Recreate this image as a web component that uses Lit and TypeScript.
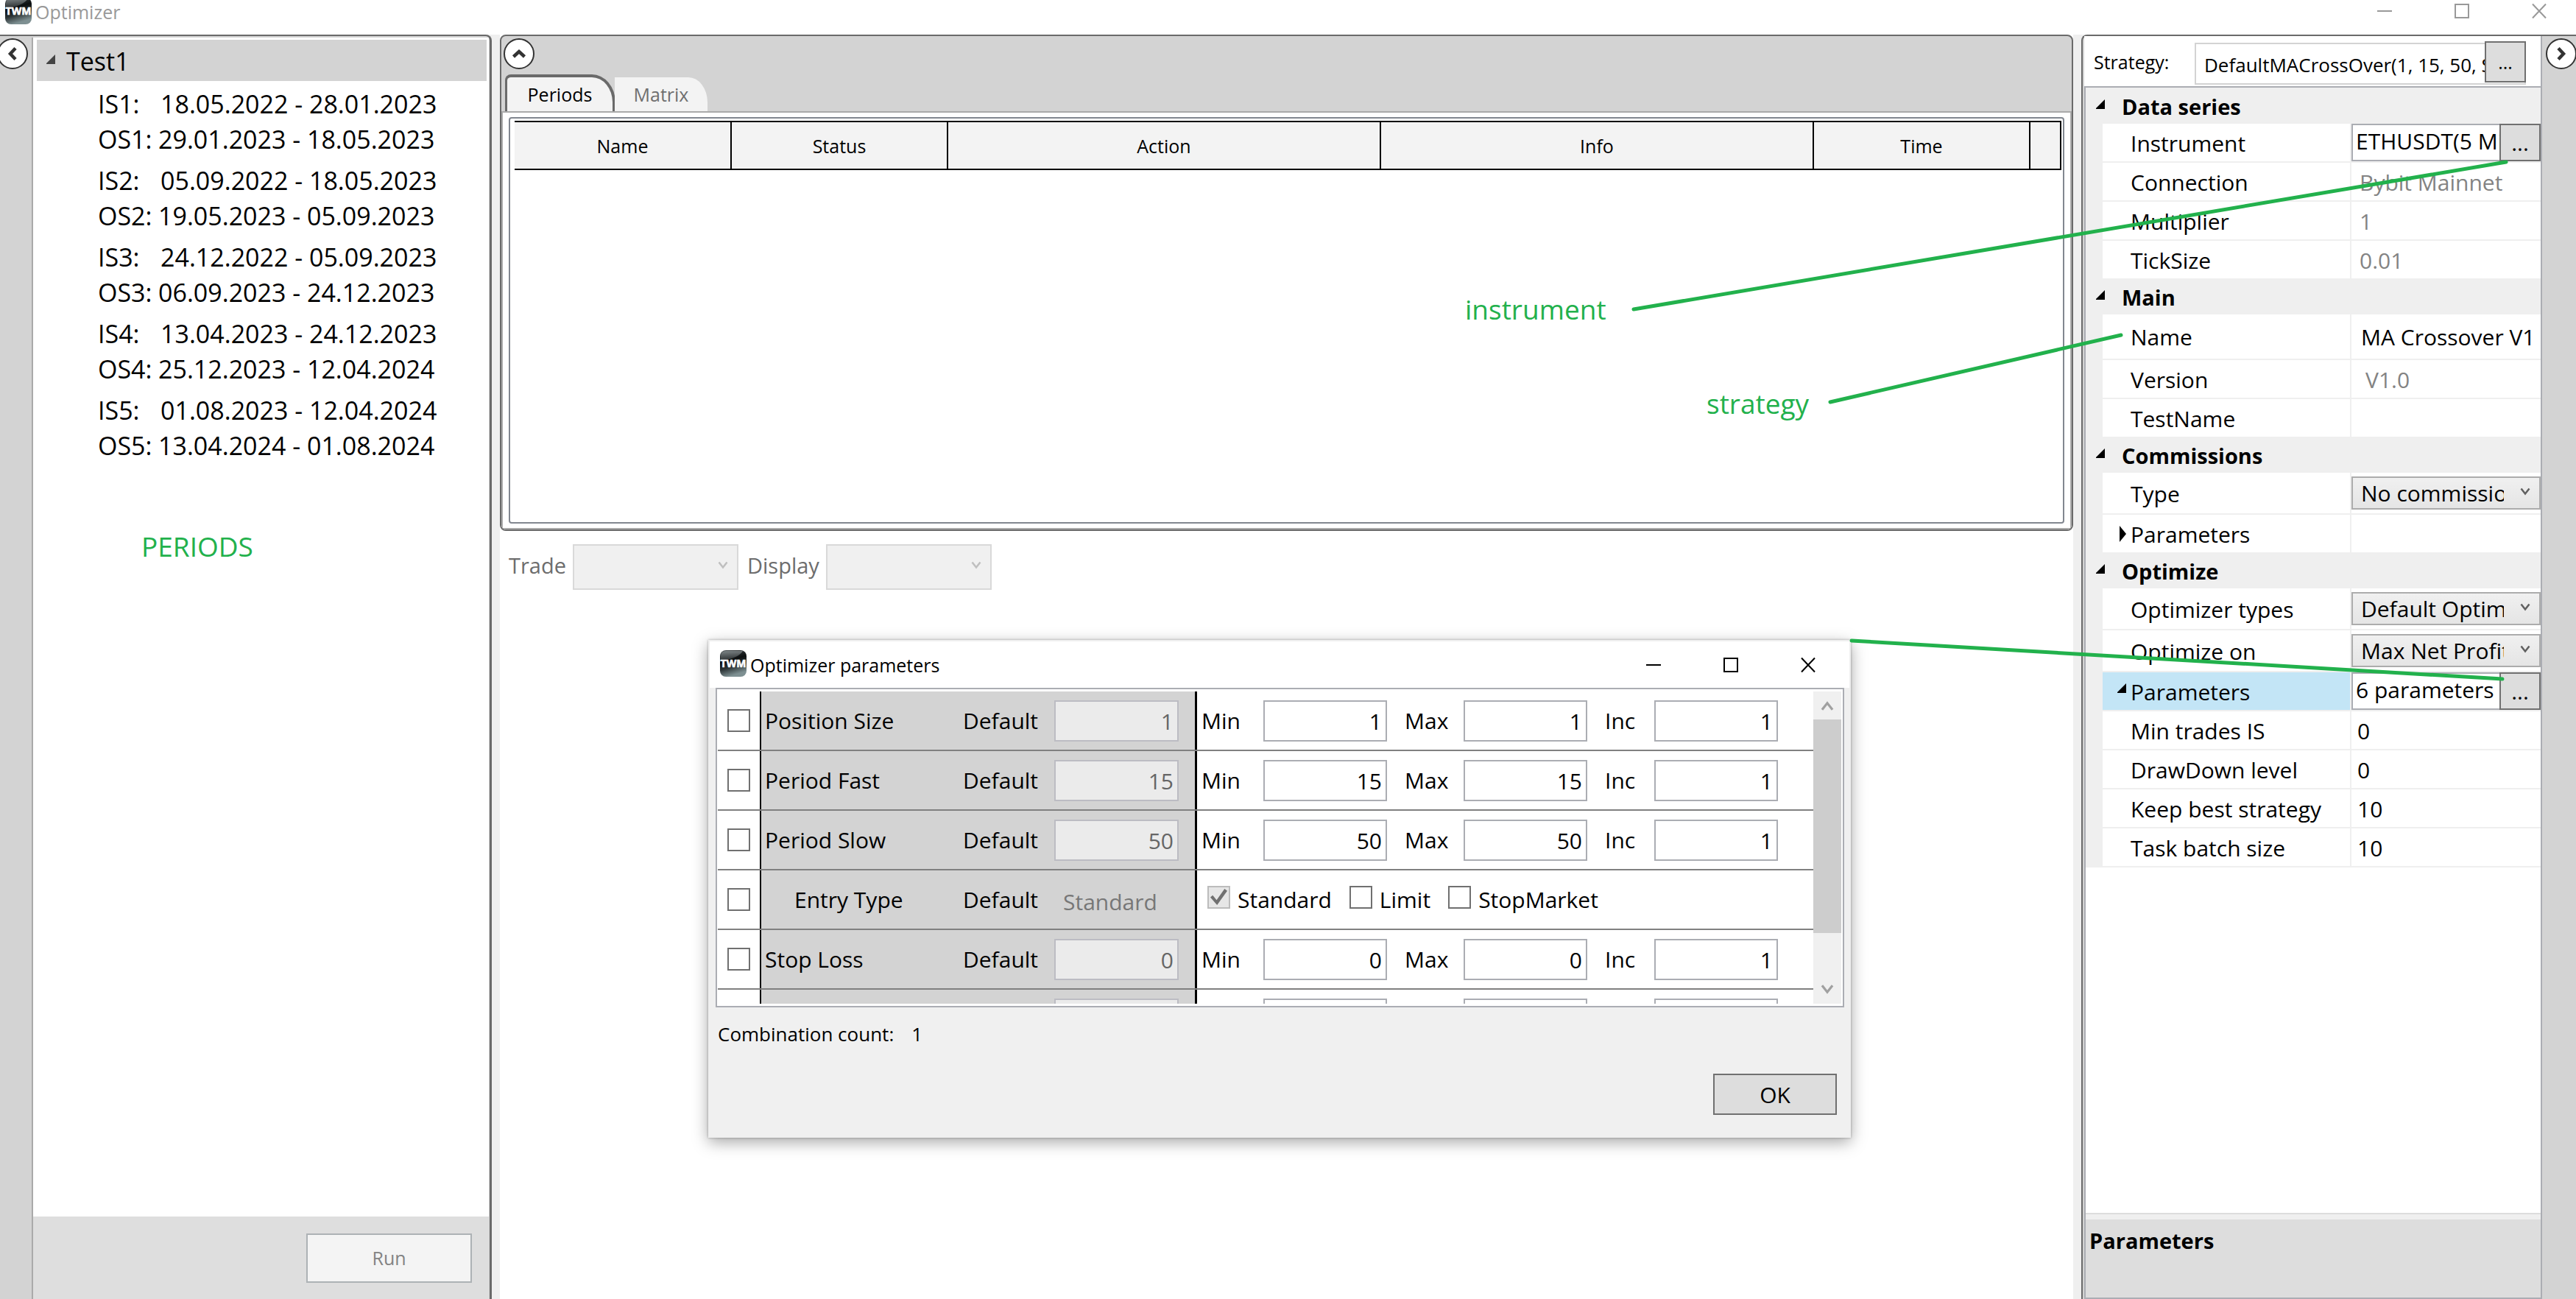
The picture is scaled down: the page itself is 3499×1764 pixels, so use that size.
import { LitElement, html, svg, css, nothing } from "lit";
import { customElement } from "lit/decorators.js";
import { classMap } from "lit/directives/class-map.js";

const base = css`
  :host {
    --font: "Open Sans", "Noto Sans", sans-serif;
    --small: 25px;
    --medium: 26px;
    --heading: 29px;
    --normal: 30px;
    --large: 34px;
    --note: 37px;
    --edge: #6a6a6a;
    --strip: #d3d3d3;
    --soft: #efefef;
    --field: #abadb3;
    font-family: var(--font);
    font-size: var(--normal);
    color: #000;
  }
  *,
  *::before {
    box-sizing: border-box;
  }
  button,
  input,
  select {
    font: inherit;
    color: inherit;
    margin: 0;
    padding: 0;
    border: 0;
    border-radius: 0;
    background: none;
    min-width: 0;
  }
  svg {
    display: block;
  }
  .combo {
    display: grid;
    align-items: center;
  }
  .combo > * {
    grid-area: 1 / 1;
  }
  .combo select {
    appearance: none;
    width: 100%;
    height: 100%;
    padding: 0 48px 0 11px;
    border: 2px solid #acacac;
    background: linear-gradient(#f0f0f0, #e5e5e5);
    opacity: 1;
  }
  .combo svg {
    justify-self: end;
    margin: 0 14px 4px 0;
    pointer-events: none;
  }
`;

const logo = (size: number) => svg`
  <svg width=${size} height=${size} viewBox="0 0 36 36" aria-hidden="true">
    <defs>
      <linearGradient id="body" x1="0" y1="0" x2="0.3" y2="1">
        <stop offset="0" stop-color="#4b5254" />
        <stop offset="0.45" stop-color="#0c0f10" />
        <stop offset="0.7" stop-color="#2b3335" />
        <stop offset="1" stop-color="#7e9092" />
      </linearGradient>
      <linearGradient id="gloss" x1="0" y1="0" x2="0" y2="1">
        <stop offset="0" stop-color="#a3abad" />
        <stop offset="1" stop-color="#3a4042" />
      </linearGradient>
    </defs>
    <rect width="36" height="36" rx="8" fill="url(#body)" />
    <path d="M8 1H31C27 7 19 12 1 14V8Q1 1 8 1Z" fill="url(#gloss)" opacity="0.6" />
    <text x="18" y="23" text-anchor="middle" font-family="Open Sans, sans-serif" font-weight="700" font-size="14" fill="#fff" stroke="#fff" stroke-width="0.6">TWM</text>
  </svg>`;

const chevron = (color: string, width = 14) => svg`
  <svg width=${width} height=${width - 2} viewBox="0 0 14 12" aria-hidden="true">
    <path d="M1.500 1.500L7 8.500L12.500 1.500" fill="none" stroke=${color} stroke-width="2.500" />
  </svg>`;

const circleArrow = (turn: number) => svg`
  <svg width="42" height="42" viewBox="0 0 42 42" aria-hidden="true">
    <circle cx="21" cy="21" r="20" fill="#fff" stroke="#333" stroke-width="2" />
    <path d="M25 13.500L18 21L25 28.500" fill="none" stroke="#333" stroke-width="4.500" transform="rotate(${turn} 21 21)" />
  </svg>`;

const triangle = (open: boolean) => svg`
  <svg width="14" height="22" viewBox="0 0 14 22" aria-hidden="true">
    ${open ? svg`<path d="M12 4V17H-1Z" />` : svg`<path d="M3 0L12 11L3 22Z" />`}
  </svg>`;

const windowIcons = (color: string) => [
  { name: "Minimize", path: "M0 11H20" },
  { name: "Maximize", path: "M1 2H19V20H1Z" },
  { name: "Close", path: "M1 1.500L19 20.500M19 1.500L1 20.500" },
].map(
  (i) => html`<button class="win" aria-label=${i.name}>
    <svg width="20" height="22" viewBox="0 0 20 22"><path d=${i.path} fill="none" stroke=${color} stroke-width="2" /></svg>
  </button>`
);

type Kind = "picker" | "readonly" | "text" | "number" | "combo" | "group";
interface Row {
  id: string;
  label: string;
  kind: Kind;
  value?: string;
  tall?: boolean;
  open?: boolean;
  selected?: boolean;
  inset?: boolean;
}
interface Section {
  title: string;
  rows: Row[];
}

const sections: Section[] = [
  {
    title: "Data series",
    rows: [
      { id: "instrument", label: "Instrument", kind: "picker", value: "ETHUSDT(5 Min)" },
      { id: "connection", label: "Connection", kind: "readonly", value: "Bybit Mainnet" },
      { id: "multiplier", label: "Multiplier", kind: "readonly", value: "1" },
      { id: "ticksize", label: "TickSize", kind: "readonly", value: "0.01" },
    ],
  },
  {
    title: "Main",
    rows: [
      { id: "name", label: "Name", kind: "text", value: "MA Crossover V1", tall: true },
      { id: "version", label: "Version", kind: "readonly", value: "V1.0", inset: true },
      { id: "testname", label: "TestName", kind: "text", value: "" },
    ],
  },
  {
    title: "Commissions",
    rows: [
      { id: "type", label: "Type", kind: "combo", value: "No commission" },
      { id: "comm-params", label: "Parameters", kind: "group", open: false },
    ],
  },
  {
    title: "Optimize",
    rows: [
      { id: "opt-types", label: "Optimizer types", kind: "combo", value: "Default Optimizer" },
      { id: "opt-on", label: "Optimize on", kind: "combo", value: "Max Net Profit" },
      { id: "opt-params", label: "Parameters", kind: "picker", value: "6 parameters", open: true, selected: true },
      { id: "min-trades", label: "Min trades IS", kind: "number", value: "0" },
      { id: "drawdown", label: "DrawDown level", kind: "number", value: "0" },
      { id: "keep-best", label: "Keep best strategy", kind: "number", value: "10" },
      { id: "batch", label: "Task batch size", kind: "number", value: "10" },
    ],
  },
];

@customElement("property-panel")
export class PropertyPanel extends LitElement {
  static styles = [
    base,
    css`
      :host {
        display: flex;
        flex-direction: column;
        min-width: 0;
        background: #fff;
        border-right: 2px solid var(--field);
      }
      .strategy {
        display: flex;
        align-items: center;
        height: 68px;
        padding: 0 20px 0 13px;
        font-size: var(--small);
      }
      .strategy label {
        width: 137px;
        padding-top: 2px;
      }
      .strategy .box {
        flex: 1;
        display: flex;
        align-items: flex-start;
        min-width: 0;
        height: 57px;
        margin-top: 6px;
        border: 2px solid var(--strip);
      }
      .strategy .box input {
        flex: 1;
        height: 53px;
        padding: 3px 0 0 11px;
        font-size: var(--medium);
      }
      .strategy .more {
        height: 56px;
        margin: -4px -2px 0 0;
      }
      .more {
        flex: none;
        width: 56px;
        border: 2px solid #707070;
        background: #ddd;
      }
      .grid {
        flex: 1;
        min-height: 0;
        border-top: 2px solid var(--field);
        border-left: 2px solid var(--field);
      }
      .rows {
        background: var(--soft);
        padding-bottom: 2px;
      }
      h2 {
        display: flex;
        align-items: center;
        gap: 21px;
        height: 49px;
        margin: 0;
        padding: 2px 0 0 14px;
        font-size: var(--heading);
        font-weight: 700;
      }
      h2 svg {
        margin-bottom: 6px;
      }
      .row {
        display: grid;
        grid-template-columns: 336px 1fr;
        column-gap: 2px;
        min-height: 51px;
        margin: 0 0 2px 23px;
      }
      .row:last-child {
        margin-bottom: 0;
      }
      .row.tall {
        min-height: 60px;
      }
      .row.combo-row {
        min-height: 55px;
      }
      .name {
        display: flex;
        align-items: center;
        gap: 4px;
        padding: 1px 0 0 20px;
        background: #fff;
        white-space: nowrap;
      }
      .name .alone {
        padding-left: 18px;
      }
      .selected .name {
        background: #c3e5f6;
      }
      .selected .name svg {
        margin-bottom: 8px;
      }
      .value {
        display: flex;
        min-width: 0;
        background: #fff;
      }
      .value > input {
        flex: 1;
        padding: 1px 0 0 8px;
      }
      .value.text > input {
        padding-left: 13px;
      }
      .value.readonly > input {
        padding-left: 11px;
        color: #838383;
      }
      .value.inset > input {
        padding-left: 19px;
      }
      .value.picker > input {
        border: 2px solid var(--field);
        border-right: 0;
        padding: 0 0 4px 4px;
      }
      .value .combo {
        flex: 1;
        min-width: 0;
      }
      .about {
        height: 117px;
        border: 2px solid var(--field);
        border-width: 0 0 2px 2px;
        background: #ddd;
      }
      .about::before {
        content: "";
        display: block;
        height: 9px;
        border-top: 2px solid #ddd;
        background: var(--soft);
      }
      .about h3 {
        margin: 0;
        padding: 9px 0 0 5px;
        font-size: var(--heading);
        line-height: 40px;
      }
    `,
  ];

  private value(r: Row) {
    if (r.kind === "combo")
      return html`<div class="combo">
        <select id=${r.id}><option>${r.value}</option></select>
        ${chevron("#606060")}
      </div>`;
    if (r.kind === "group") return nothing;
    return html`<input id=${r.id} .value=${r.value ?? ""} ?disabled=${r.kind === "readonly"} />
      ${r.kind === "picker" ? html`<button class="more" aria-label=${`Edit ${r.label}`}>...</button>` : nothing}`;
  }

  render() {
    return html`
      <div class="strategy">
        <label for="strategy">Strategy:</label>
        <div class="box">
          <input id="strategy" .value=${"DefaultMACrossOver(1, 15, 50, Standard)"} />
          <button class="more" aria-label="Choose strategy">...</button>
        </div>
      </div>
      <div class="grid">
        <div class="rows">
          ${sections.map(
            (s) => html`<section>
              <h2>${triangle(true)}${s.title}</h2>
              ${s.rows.map(
                (r) => html`<div
                  class=${classMap({ row: true, tall: !!r.tall, "combo-row": r.kind === "combo", selected: !!r.selected })}
                >
                  <div class="name">
                    ${r.open === undefined ? nothing : triangle(r.open)}
                    ${r.kind === "group"
                      ? html`<span>${r.label}</span>`
                      : html`<label class=${r.open === undefined ? "alone" : ""} for=${r.id}>${r.label}</label>`}
                  </div>
                  <div class="value ${r.kind} ${r.inset ? "inset" : ""}">${this.value(r)}</div>
                </div>`
              )}
            </section>`
          )}
        </div>
      </div>
      <div class="about"><h3>Parameters</h3></div>
    `;
  }
}

interface Param {
  name: string;
  def?: string;
  min?: string;
  max?: string;
  inc?: string;
  choices?: { label: string; on: boolean }[];
}

const params: Param[] = [
  { name: "Position Size", def: "1", min: "1", max: "1", inc: "1" },
  { name: "Period Fast", def: "15", min: "15", max: "15", inc: "1" },
  { name: "Period Slow", def: "50", min: "50", max: "50", inc: "1" },
  {
    name: "Entry Type",
    def: "Standard",
    choices: [
      { label: "Standard", on: true },
      { label: "Limit", on: false },
      { label: "StopMarket", on: false },
    ],
  },
  { name: "Stop Loss", def: "0", min: "0", max: "0", inc: "1" },
  { name: "" },
];

@customElement("parameters-dialog")
export class ParametersDialog extends LitElement {
  static styles = [
    base,
    css`
      :host {
        display: block;
        border: 2px solid var(--soft);
        background: #f0f0f0;
        box-shadow: 0 6px 20px rgba(0, 0, 0, 0.35), 0 0 3px rgba(0, 0, 0, 0.3);
      }
      header {
        display: flex;
        align-items: center;
        gap: 5px;
        height: 63px;
        padding: 0 4px 0 14px;
        background: #fff;
        font-size: var(--small);
      }
      header h1 {
        flex: 1;
        margin: 0;
        font-size: var(--small);
        font-weight: 400;
      }
      header > svg {
        margin-bottom: 4px;
      }
      .win {
        display: grid;
        place-items: center;
        width: 101px;
        height: 60px;
      }
      .list {
        display: flex;
        height: 434px;
        margin: 0 7px 0 8px;
        padding: 3px 2px 3px 1px;
        border: 2px solid var(--field);
        background: #fff;
      }
      .rows {
        flex: 1;
        overflow: hidden;
      }
      .row {
        display: flex;
        height: 81px;
        border-bottom: 2px solid #808080;
      }
      .pick {
        display: flex;
        align-items: center;
        width: 59px;
        padding-left: 13px;
        border-right: 2px solid #000;
      }
      .fixed {
        display: grid;
        grid-template-columns: 269px 124px 169px;
        align-items: center;
        width: 592px;
        padding-left: 5px;
        border-right: 3px solid #000;
        background: var(--strip);
      }
      .range {
        display: grid;
        grid-template-columns: 84px 168px 104px 168px 91px 168px;
        align-items: center;
        padding-left: 6px;
      }
      .range label + input ~ label {
        padding-left: 24px;
      }
      .number {
        height: 56px;
        padding: 1px 5px 0 0;
        border: 2px solid var(--field);
        background: #fff;
        text-align: right;
      }
      .fixed .number {
        border-color: #bcbcc3;
        background: #ebebeb;
        color: #666;
      }
      .indent {
        padding-left: 40px;
      }
      .std {
        padding: 5px 0 0 12px;
        color: #777;
      }
      input[type="checkbox"] {
        appearance: none;
        display: grid;
        place-items: center;
        flex: none;
        width: 31px;
        height: 31px;
        border: 2px solid #707070;
        background: #fff;
      }
      input[type="checkbox"]:disabled {
        border-color: #bcbcbc;
        background: #e6e6e6;
      }
      input[type="checkbox"]:checked::before {
        content: "";
        width: 23px;
        height: 23px;
        background: #707070;
        clip-path: polygon(0 50%, 14% 38%, 37% 66%, 84% 0, 100% 12%, 40% 96%);
      }
      .choices {
        display: flex;
        align-items: center;
        gap: 24px;
        padding-left: 14px;
      }
      .choices label {
        display: flex;
        align-items: center;
        gap: 10px;
      }
      .choices input {
        margin-bottom: 6px;
      }
      .bar {
        display: flex;
        flex-direction: column;
        width: 38px;
        background: #f0f0f0;
      }
      .bar button {
        display: grid;
        place-items: center;
        height: 38px;
      }
      .up svg {
        transform: rotate(180deg);
      }
      .thumb {
        flex: 290;
        background: #cdcdcd;
      }
      .free {
        flex: 58;
      }
      .count {
        display: flex;
        gap: 24px;
        padding: 18px 0 0 11px;
        font-size: var(--medium);
        line-height: 36px;
      }
      footer {
        display: flex;
        justify-content: flex-end;
        padding: 36px 17px 29px;
      }
      .ok {
        width: 168px;
        height: 56px;
        border: 2px solid #707070;
        background: #ddd;
      }
    `,
  ];

  private row(p: Param, i: number) {
    const field = (key: string, label: string, value?: string, off = false) =>
      value === undefined
        ? html`<span></span><input class="number" aria-label=${label} ?disabled=${off} />`
        : html`
            <label for="${key}${i}">${label}</label>
            <input class="number" id="${key}${i}" .value=${value} ?disabled=${off} />
          `;
    return html`<div class="row">
      <div class="pick"><input type="checkbox" id="use${i}" aria-label="Optimize ${p.name}" /></div>
      <div class="fixed">
        <label for="use${i}" class=${p.choices ? "indent" : ""}>${p.name}</label>
        ${p.choices ? html`<span>Default</span><span class="std">${p.def}</span>` : field("def", "Default", p.def, true)}
      </div>
      ${p.choices
        ? html`<div class="choices">
            ${p.choices.map(
              (c) => html`<label><input type="checkbox" .checked=${c.on} ?disabled=${c.on} />${c.label}</label>`
            )}
          </div>`
        : html`<div class="range">${field("min", "Min", p.min)}${field("max", "Max", p.max)}${field("inc", "Inc", p.inc)}</div>`}
    </div>`;
  }

  render() {
    return html`
      <header>
        ${logo(36)}
        <h1>Optimizer parameters</h1>
        <div class="wins">${windowIcons("#000")}</div>
      </header>
      <div class="list">
        <div class="rows">${params.map((p, i) => this.row(p, i))}</div>
        <div class="bar">
          <button class="up" aria-label="Scroll up">${chevron("#a0a0a0", 18)}</button>
          <div class="thumb"></div>
          <div class="free"></div>
          <button aria-label="Scroll down">${chevron("#a0a0a0", 18)}</button>
        </div>
      </div>
      <div class="count"><span>Combination count:</span><span>1</span></div>
      <footer><button class="ok">OK</button></footer>
    `;
  }

  static {
    this.styles = [
      ...(this.styles as any[]),
      css`
        .wins {
          display: grid;
          grid-template-columns: repeat(3, 105px);
        }
        .wins .win {
          width: 105px;
        }
      `,
    ];
  }
}

const periods = [
  ["18.05.2022 - 28.01.2023", "29.01.2023 - 18.05.2023"],
  ["05.09.2022 - 18.05.2023", "19.05.2023 - 05.09.2023"],
  ["24.12.2022 - 05.09.2023", "06.09.2023 - 24.12.2023"],
  ["13.04.2023 - 24.12.2023", "25.12.2023 - 12.04.2024"],
  ["01.08.2023 - 12.04.2024", "13.04.2024 - 01.08.2024"],
];

const columns = [
  { title: "Name", cls: "one" },
  { title: "Status", cls: "one" },
  { title: "Action", cls: "two" },
  { title: "Info", cls: "two" },
  { title: "Time", cls: "one" },
  { title: "", cls: "rest" },
];

@customElement("app-root")
export class AppRoot extends LitElement {
  static styles = [
    base,
    css`
      :host {
        position: relative;
        display: flex;
        flex-direction: column;
        height: 100vh;
        overflow: hidden;
        background: #fff;
      }
      .title {
        display: flex;
        align-items: flex-start;
        flex: none;
        height: 47px;
        padding-left: 7px;
        color: #999;
        font-size: var(--small);
        line-height: 32px;
      }
      .title > svg {
        margin: -3px 5px 0 0;
      }
      .title h1 {
        flex: 1;
        margin: 0;
        font-size: var(--small);
        font-weight: 400;
      }
      .win {
        display: grid;
        place-items: center;
        width: 105px;
        height: 29px;
      }
      .win:last-child {
        margin-right: -2px;
      }
      .main {
        flex: 1;
        min-height: 0;
        display: grid;
        grid-template-columns: 668px minmax(0, 1fr) 672px;
        column-gap: 11px;
        background: var(--soft);
      }
      .round {
        display: block;
        width: 42px;
        height: 42px;
      }
      .left {
        display: grid;
        grid-template-columns: 43px 1fr;
        border: 2px solid var(--edge);
        border-width: 2px 3px 0 0;
        border-top-right-radius: 8px;
        background: var(--strip);
      }
      .left .round {
        margin: 3px 0 0 -4px;
      }
      .tree {
        display: flex;
        flex-direction: column;
        min-width: 0;
        margin: 2px 1px 0 0;
        border-left: 2px solid #aaa;
        background: #fff;
      }
      .test {
        display: flex;
        align-items: center;
        gap: 13px;
        height: 56px;
        margin: 3px 3px 0 5px;
        padding: 2px 0 0 13px;
        background: var(--strip);
        font-size: var(--large);
        text-align: left;
      }
      .test svg {
        margin-bottom: 4px;
        fill: #444;
      }
      .periods {
        flex: 1;
        display: flex;
        flex-direction: column;
        gap: 8px;
        margin: 0;
        padding: 7px 0 0 88px;
        list-style: none;
        font-size: var(--large);
        line-height: 48px;
      }
      .periods li {
        display: grid;
        grid-template-columns: 82px 1fr;
      }
      .periods .is {
        padding-left: 3px;
      }
      .periods .os {
        white-space: nowrap;
      }
      .actions {
        display: flex;
        align-items: center;
        justify-content: flex-end;
        height: 112px;
        padding: 0 23px 0 0;
        background: #dedede;
        font-size: var(--small);
      }
      .run {
        width: 225px;
        height: 67px;
        border: 2px solid #adb2b5;
        background: #f4f4f4;
        color: #838383;
      }
      .center {
        display: grid;
        grid-template-rows: minmax(0, 674fr) minmax(0, 1043fr);
        min-width: 0;
        background: #fff;
      }
      .results {
        display: flex;
        flex-direction: column;
        border: 2px solid var(--edge);
        border-radius: 8px;
        background: var(--strip);
        overflow: hidden;
      }
      .results .round {
        margin: 3px 0 7px 3px;
      }
      .tabs {
        display: flex;
        align-items: flex-end;
        padding-left: 5px;
        font-size: var(--small);
      }
      .tab {
        background: #f3f3f3;
      }
      .tab.on {
        width: 150px;
        height: 50px;
        border: 3px solid var(--edge);
        border-width: 4px 4px 0 3px;
        border-radius: 8px 32px 0 0 / 8px 38px 0 0;
      }
      .tab.off {
        width: 126px;
        height: 46px;
        margin-left: -1px;
        border-radius: 0 26px 0 0 / 0 34px 0 0;
        color: #6f6f6f;
      }
      .page {
        flex: 1;
        padding: 6px 8px;
        border: 2px solid #aaa;
        background: #fff;
      }
      .listbox {
        height: 100%;
        padding: 3px 2px 0 6px;
        border: 2px solid #828790;
        border-radius: 4px;
      }
      table {
        width: 100%;
        table-layout: fixed;
        border-collapse: collapse;
        font-size: var(--small);
      }
      th {
        height: 65px;
        padding: 0;
        border: 2px solid #000;
        border-left: 0;
        background: #f3f3f3;
        font-weight: 400;
      }
      .one {
        width: 14%;
      }
      .two {
        width: 28%;
      }
      .charts {
        display: flex;
        align-items: flex-start;
        padding: 18px 12px;
        color: #6d6d6d;
        font-size: var(--heading);
        line-height: 58px;
      }
      .charts .combo {
        width: 225px;
        height: 56px;
        margin: 0 12px 0 9px;
      }
      .charts select {
        border-color: #d9d9d9;
        background: #f0f0f0;
      }
      .right {
        display: grid;
        grid-template-columns: minmax(0, 1fr) 46px;
        padding-left: 2px;
        border: 2px solid var(--edge);
        border-width: 2px 0 0 2px;
        border-top-left-radius: 8px;
        background: var(--strip);
      }
      .right .round {
        margin: 3px 0 0 5px;
      }
      .dialog {
        position: absolute;
        left: 962px;
        top: 869px;
        width: 1552px;
      }
      .notes {
        position: absolute;
        left: 0;
        top: 0;
        width: 100%;
        height: 100%;
        pointer-events: none;
        fill: #22b14c;
        font-size: var(--note);
      }
      .notes path {
        fill: none;
        stroke: #22b14c;
        stroke-width: 5px;
        stroke-linecap: round;
      }
    `,
  ];

  render() {
    return html`
      <header class="title">
        ${logo(36)}
        <h1>Optimizer</h1>
        ${windowIcons("#999")}
      </header>
      <main class="main">
        <section class="left">
          <div><button class="round" aria-label="Collapse tests">${circleArrow(0)}</button></div>
          <div class="tree">
            <button class="test">${triangle(true)}Test1</button>
            <ul class="periods">
              ${periods.map(
                ([is, os], i) => html`<li>
                  <span>IS${i + 1}:</span><span class="is">${is}</span>
                  <span class="os">OS${i + 1}:</span><span>${os}</span>
                </li>`
              )}
            </ul>
            <div class="actions"><button class="run" disabled>Run</button></div>
          </div>
        </section>
        <section class="center">
          <div class="results">
            <div><button class="round" aria-label="Collapse results">${circleArrow(90)}</button></div>
            <div class="tabs">
              <button class="tab on">Periods</button>
              <button class="tab off">Matrix</button>
            </div>
            <div class="page">
              <div class="listbox">
                <table>
                  <thead>
                    <tr>${columns.map((c) => html`<th class=${c.cls}>${c.title}</th>`)}</tr>
                  </thead>
                </table>
              </div>
            </div>
          </div>
          <div class="charts">
            <label for="trade">Trade</label>
            <div class="combo"><select id="trade" disabled></select>${chevron("#bfbfbf")}</div>
            <label for="display">Display</label>
            <div class="combo"><select id="display" disabled></select>${chevron("#bfbfbf")}</div>
          </div>
        </section>
        <section class="right">
          <property-panel></property-panel>
          <div><button class="round" aria-label="Collapse properties">${circleArrow(180)}</button></div>
        </section>
      </main>
      <parameters-dialog class="dialog"></parameters-dialog>
      <svg class="notes">
        <text x="192" y="756">PERIODS</text>
        <text x="1990" y="434">instrument</text>
        <text x="2318" y="562">strategy</text>
        <path d="M2219 420L3404 220M2486 546L2881 455M2515 870L3399 922" />
      </svg>
    `;
  }
}
